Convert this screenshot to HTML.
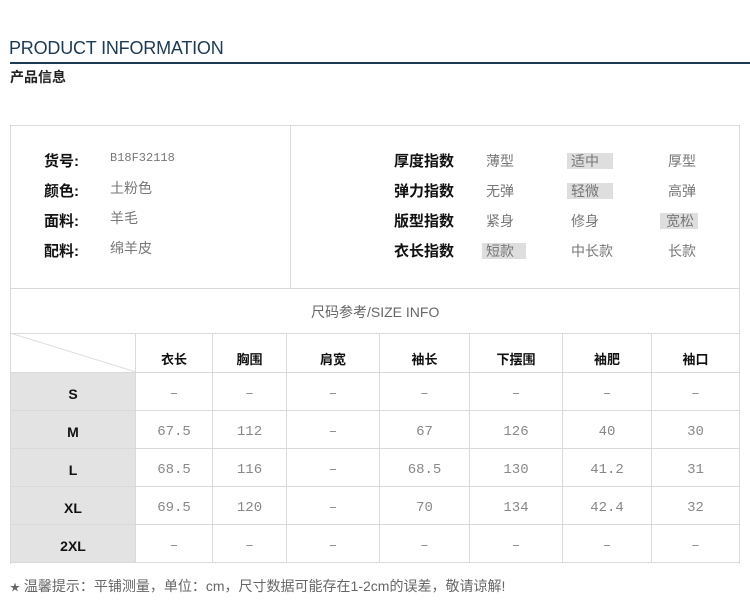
<!DOCTYPE html><html><head><meta charset="utf-8"><style>
body{margin:0;width:750px;height:611px;background:#fff;font-family:"Liberation Sans","Noto Sans CJK SC",sans-serif;position:relative;overflow:hidden}
.a{position:absolute;white-space:nowrap}
.t{left:9px;top:38px;font-size:18px;color:#1d3a52;letter-spacing:-0.2px}
.line{left:10px;top:62px;width:740px;height:2px;background:#1d3a52}
.cn{left:10px;top:67px;font-size:14px;font-weight:bold;color:#222}
.box{left:10px;top:125px;width:728px;height:438px;border:1px solid #d9d9d9;border-bottom:none}
.k{font-size:15px;font-weight:bold;color:#111}
.v{font-size:14px;color:#777}
.m{font-family:"Liberation Mono",monospace;font-size:12px;color:#777}
.hl{background:#dedede;padding:0 4px;margin-left:-4px}
table{position:absolute;left:10px;top:333px;border-collapse:collapse;width:730px}
td{border:1px solid #d9d9d9;text-align:center;height:38px;padding:5px 0 0;box-sizing:border-box;font-size:14px;color:#888;font-family:"Liberation Mono",monospace}
th{border:1px solid #d9d9d9;font-size:13px;color:#111;height:39px;padding:0;padding-top:11px;box-sizing:border-box}
td.s{background:#e3e3e3;color:#111;font-family:"Liberation Sans",sans-serif;font-weight:bold;font-size:14px}
</style></head><body>
<div class="a t">PRODUCT INFORMATION</div>
<div class="a line"></div>
<div class="a cn">产品信息</div>
<div class="a box"></div>
<div class="a" style="left:290px;top:126px;width:1px;height:162px;background:#d9d9d9"></div>
<div class="a" style="left:10px;top:288px;width:730px;height:1px;background:#d9d9d9"></div>
<div class="a k" style="left:44px;top:150px">货号:</div><div class="a m" style="left:110px;top:151px">B18F32118</div>
<div class="a k" style="left:44px;top:180px">颜色:</div><div class="a v" style="left:110px;top:178px">土粉色</div>
<div class="a k" style="left:44px;top:210px">面料:</div><div class="a v" style="left:110px;top:208px">羊毛</div>
<div class="a k" style="left:44px;top:240px">配料:</div><div class="a v" style="left:110px;top:238px">绵羊皮</div>
<div class="a k" style="left:394px;top:150px">厚度指数</div><div class="a v" style="left:486px;top:151px">薄型</div><div class="a v" style="left:571px;top:151px"><span class="hl" style="padding-right:14px">适中</span></div><div class="a v" style="left:668px;top:151px">厚型</div>
<div class="a k" style="left:394px;top:180px">弹力指数</div><div class="a v" style="left:486px;top:181px">无弹</div><div class="a v" style="left:571px;top:181px"><span class="hl" style="padding-right:14px">轻微</span></div><div class="a v" style="left:668px;top:181px">高弹</div>
<div class="a k" style="left:394px;top:210px">版型指数</div><div class="a v" style="left:486px;top:211px">紧身</div><div class="a v" style="left:571px;top:211px">修身</div><div class="a v" style="left:668px;top:211px"><span class="hl" style="padding-right:4px;padding-left:6px;margin-left:-8px">宽松</span></div>
<div class="a k" style="left:394px;top:240px">衣长指数</div><div class="a v" style="left:486px;top:241px"><span class="hl" style="padding-right:12px">短款</span></div><div class="a v" style="left:571px;top:241px">中长款</div><div class="a v" style="left:668px;top:241px">长款</div>
<div class="a" style="left:311px;top:302px;font-size:14px;color:#666">尺码参考/SIZE INFO</div>
<svg class="a" style="left:10px;top:333px" width="126" height="40"><line x1="0" y1="0" x2="126" y2="39" stroke="#ddd"/></svg>
<table>
<tr><th style="width:125px;border-left:none"></th><th style="width:77px">衣长</th><th style="width:74px">胸围</th><th style="width:93px">肩宽</th><th style="width:90px">袖长</th><th style="width:93px">下摆围</th><th style="width:89px">袖肥</th><th>袖口</th></tr>
<tr><td class="s">S</td><td>–</td><td>–</td><td>–</td><td>–</td><td>–</td><td>–</td><td>–</td></tr>
<tr><td class="s">M</td><td>67.5</td><td>112</td><td>–</td><td>67</td><td>126</td><td>40</td><td>30</td></tr>
<tr><td class="s">L</td><td>68.5</td><td>116</td><td>–</td><td>68.5</td><td>130</td><td>41.2</td><td>31</td></tr>
<tr><td class="s">XL</td><td>69.5</td><td>120</td><td>–</td><td>70</td><td>134</td><td>42.4</td><td>32</td></tr>
<tr><td class="s">2XL</td><td>–</td><td>–</td><td>–</td><td>–</td><td>–</td><td>–</td><td>–</td></tr>
</table>
<div class="a" style="left:10px;top:576px;font-size:14px;color:#666"><span style="font-size:10px">★</span> 温馨提示：平铺测量，单位：cm，尺寸数据可能存在1-2cm的误差，敬请谅解!</div>
</body></html>
